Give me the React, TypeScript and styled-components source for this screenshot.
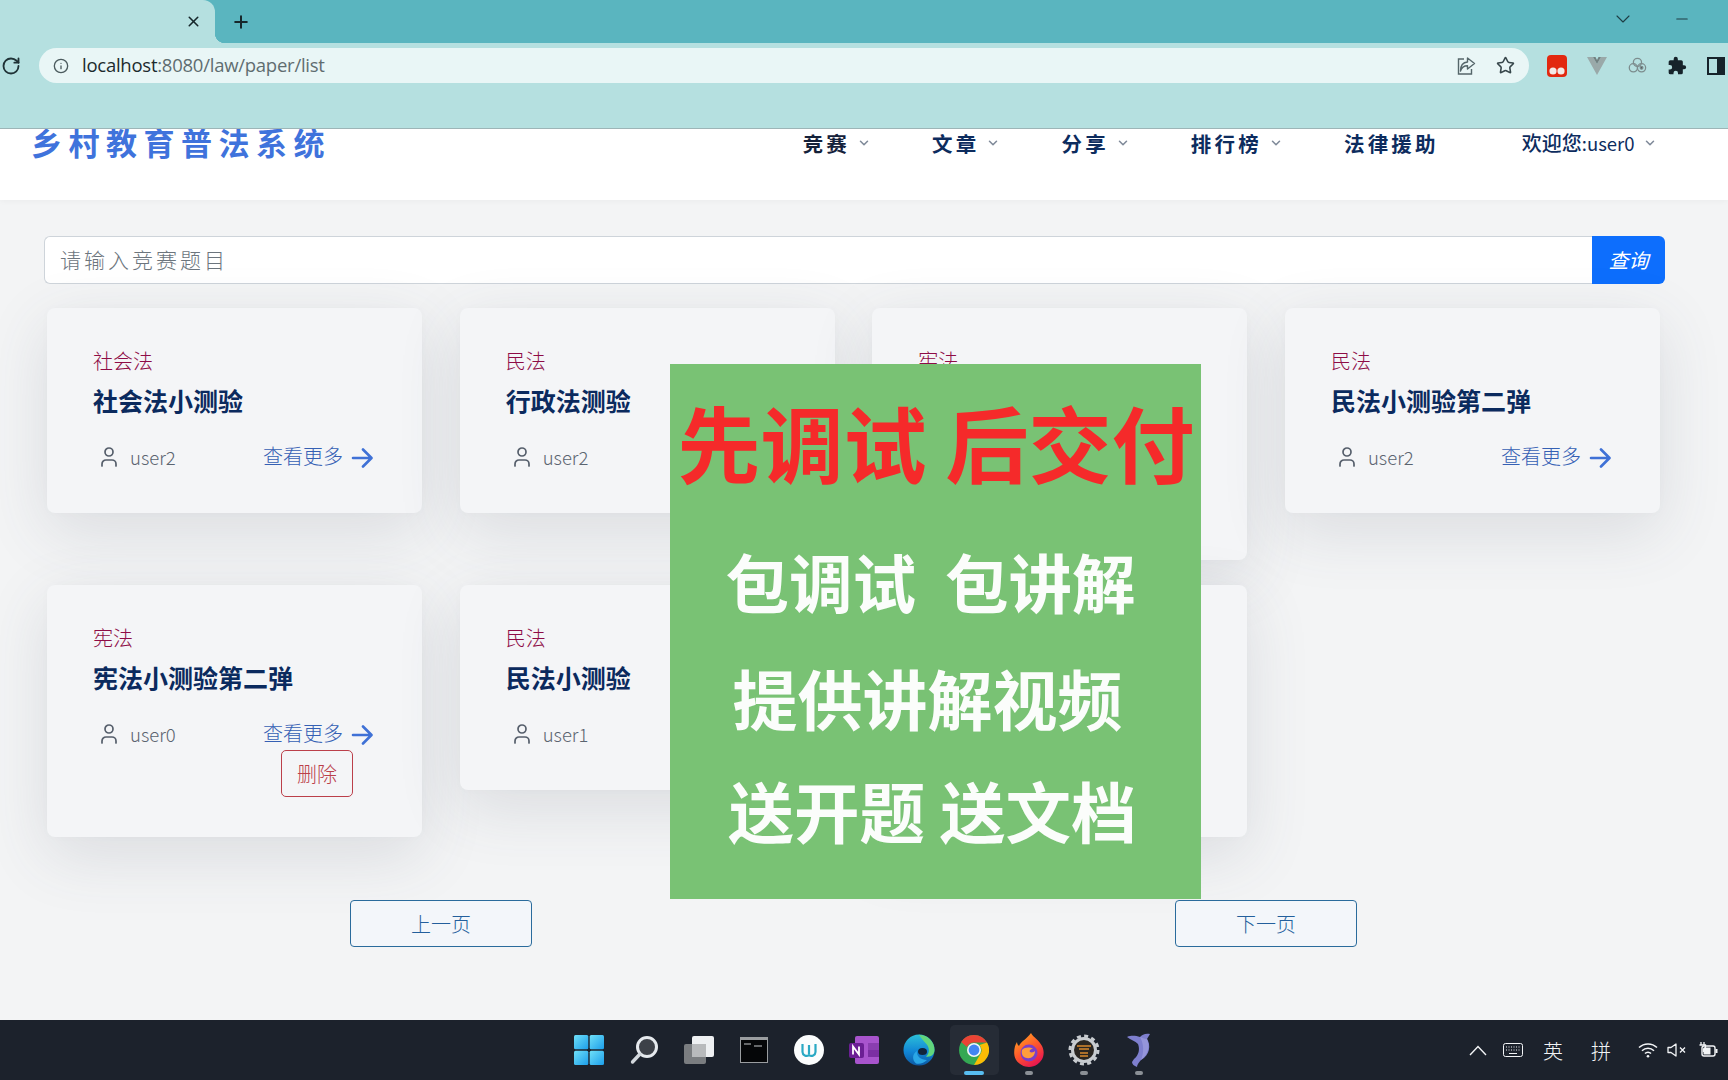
import React from "react";
import styled, { createGlobalStyle } from "styled-components";
import { ChevronDown, Info, Plus, RotateCw, Star, User, X, Minus } from "lucide-react";

const Global = createGlobalStyle`
  html, body { margin: 0; padding: 0; background: #f3f4f5; }
  * { box-sizing: border-box; }
  body { font-family: "Noto Sans CJK SC", "Noto Sans", sans-serif; }
`;

const Screen = styled.div`
  position: relative;
  width: 1728px;
  height: 1080px;
  overflow: hidden;
  display: flex;
  flex-direction: column;
  background: #f3f4f5;
`;

const BrowserChrome = styled.header`
  flex: none;
  height: 129px;
  background: #b5e0e0;
  border-bottom: 1px solid #9db5b7;
  position: relative;
  z-index: 2;
`;

const TabStrip = styled.div`
  height: 43px;
  background: #5ab5bf;
  display: flex;
  align-items: center;
`;

const Tab = styled.div`
  position: relative;
  width: 215px;
  height: 43px;
  background: #b5e0e0;
  border-top-right-radius: 12px;
  display: flex;
  align-items: center;
  justify-content: flex-end;
  padding-right: 13px;
  color: #16272b;
  &::after {
    content: "";
    position: absolute;
    right: -10px;
    bottom: 0;
    width: 10px;
    height: 10px;
    background: radial-gradient(circle at 100% 0, transparent 10px, #b5e0e0 10.5px);
  }
`;

const NewTab = styled.div`
  margin-left: 16px;
  display: flex;
  color: #16272b;
`;

const WindowControls = styled.div`
  margin-left: auto;
  display: flex;
  align-items: center;
  gap: 38px;
  padding: 0 37px 6px 0;
  color: #1e3d44;
`;

const Toolbar = styled.div`
  height: 35px;
  margin-top: 5px;
  display: flex;
  align-items: center;
`;

const Reload = styled.div`
  width: 39px;
  display: flex;
  padding-left: 1px;
  color: #1f3236;
`;

const AddressBar = styled.div`
  width: 1490px;
  height: 35px;
  border-radius: 18px;
  background: #e9f6f6;
  display: flex;
  align-items: center;
  padding: 0 14px 0 14px;
  color: #4b5b5e;
`;

const Url = styled.span`
  margin-left: 13px;
  padding-bottom: 2px;
  font-family: "Open Sans", sans-serif;
  font-size: 18.5px;
  letter-spacing: -0.25px;
  color: #5f6d70;
  b { font-weight: 400; color: #1c2a2d; }
`;

const AddressActions = styled.div`
  margin-left: auto;
  display: flex;
  align-items: center;
  gap: 20px;
`;

const Extensions = styled.div`
  display: flex;
  align-items: center;
  gap: 20px;
  padding-left: 18px;
`;

const Nav = styled.nav`
  flex: none;
  height: 71px;
  background: #fff;
  padding: 0 71px 0 31px;
  display: flex;
  align-items: flex-start;
  box-shadow: 0 1px 6px rgba(0, 0, 0, 0.04);
  position: relative;
  z-index: 1;
`;

const Brand = styled.div`
  height: 26px;
  line-height: 26px;
  font-size: 31px;
  font-weight: 700;
  letter-spacing: 6.5px;
  color: #3f73dc;
  white-space: nowrap;
`;

const Menu = styled.div`
  margin-left: auto;
  height: 27px;
  display: flex;
  align-items: center;
  gap: 61px;
`;

const MenuItem = styled.div<{ $plain?: boolean; $user?: boolean; $dark?: boolean }>`
  display: flex;
  align-items: center;
  gap: ${(p) => (p.$user ? "8.5px" : "7px")};
  font-size: ${(p) => (p.$user ? "20px" : "20.5px")};
  font-weight: ${(p) => (p.$user ? 500 : 700)};
  letter-spacing: ${(p) => (p.$user ? "0" : "3.2px")};
  color: ${(p) => (p.$dark ? "#14213a" : "#0d2c5e")};
  padding-right: ${(p) => (p.$plain ? "22px" : "0")};
  white-space: nowrap;
  svg { color: #7f8a99; }
`;

const UserName = styled.span`
  font-size: 18.5px;
  font-weight: 400;
`;

const Main = styled.main`
  flex: 1;
  position: relative;
  padding: 36px 0 0 44px;
`;

const SearchRow = styled.form`
  width: 1621px;
  height: 48px;
  display: flex;
`;

const SearchInput = styled.input`
  flex: 1;
  height: 48px;
  border: 1px solid #ced4da;
  border-right: none;
  border-radius: 6px 0 0 6px;
  background: #fff;
  padding: 0 15px 2px;
  font-family: inherit;
  font-size: 21px;
  font-weight: 300;
  letter-spacing: 3px;
  &::placeholder { color: #6c757d; opacity: 1; }
`;

const SearchButton = styled.button`
  width: 73px;
  height: 48px;
  border: none;
  border-radius: 0 6px 6px 0;
  background: #0d6efd;
  color: #fff;
  padding: 0 0 2px;
  font-family: inherit;
  font-size: 20px;
  font-style: italic;
  font-weight: 400;
`;

const CardGrid = styled.section`
  margin: 24px 0 0 3px;
  width: 1614px;
  display: grid;
  grid-template-columns: repeat(4, 375px);
  column-gap: 37.67px;
  row-gap: 25px;
  align-items: start;
`;

const Card = styled.article`
  background: #f4f5f7;
  border-radius: 8px;
  padding: 38px 49px 40px 46px;
  display: flex;
  flex-direction: column;
  box-shadow: 0 18px 64px rgba(70, 80, 100, 0.14), 0 0 8px rgba(70, 80, 100, 0.02);
`;

const Tag = styled.div`
  height: 30px;
  line-height: 30px;
  font-size: 20px;
  font-weight: 300;
  color: #8e0c46;
`;

const Title = styled.h3`
  margin: 6px 0 0;
  height: 36px;
  line-height: 36px;
  font-size: 25px;
  font-weight: 700;
  color: #0b2a5e;
  white-space: nowrap;
`;

const CardFooter = styled.div`
  margin: 24px 0 1px;
  height: 30px;
  display: flex;
  align-items: center;
  justify-content: space-between;
`;

const Author = styled.div`
  display: flex;
  align-items: center;
  gap: 9px;
  padding-left: 4px;
  font-size: 18.5px;
  font-weight: 300;
  color: #5b6470;
  svg { color: #555e6b; }
`;

const More = styled.a`
  display: flex;
  align-items: center;
  gap: 8px;
  font-size: 20px;
  font-weight: 300;
  color: #3560b4;
  line-height: 24px;
  margin-top: -3px;
  svg { margin-top: 4px; }
`;

const DeleteButton = styled.button`
  align-self: flex-end;
  margin-right: 20px;
  width: 72px;
  height: 47px;
  border: 1px solid #bb3f4a;
  border-radius: 5px;
  background: transparent;
  color: #bb3f4a;
  font-family: inherit;
  font-size: 20px;
  font-weight: 300;
`;

const Pager = styled.div`
  margin: 63px 0 0 306px;
  width: 1007px;
  display: flex;
  justify-content: space-between;
`;

const PageButton = styled.button`
  width: 182px;
  height: 47px;
  border: 1px solid #2a6b9c;
  border-radius: 4px;
  background: #f3f6fa;
  color: #235f9c;
  font-family: inherit;
  font-size: 20px;
  font-weight: 300;
`;

const Promo = styled.aside`
  position: absolute;
  left: 670px;
  top: 164px;
  width: 531px;
  height: 535px;
  background: #79c274;
  display: flex;
  flex-direction: column;
  align-items: center;
`;

const PromoHead = styled.div`
  margin: 19px 0 0 1px;
  height: 116px;
  line-height: 116px;
  font-size: 83px;
  font-weight: 700;
  color: #f52a2a;
  white-space: pre;
`;

const PromoLine = styled.div<{ $top: number; $left: number; $size: number }>`
  margin-top: ${(p) => p.$top}px;
  margin-left: ${(p) => p.$left}px;
  height: 90px;
  line-height: 90px;
  font-size: ${(p) => p.$size}px;
  font-weight: 700;
  color: #fbfdfb;
  white-space: pre;
`;

const Taskbar = styled.footer`
  flex: none;
  height: 60px;
  background: #1c222c;
  display: grid;
  grid-template-columns: 1fr auto 1fr;
  align-items: center;
  position: relative;
  z-index: 2;
`;

const Dock = styled.div`
  grid-column: 2;
  display: flex;
  align-items: center;
`;

const DockItem = styled.div<{ $active?: boolean; $running?: boolean }>`
  position: relative;
  width: 55px;
  height: 50px;
  display: flex;
  align-items: center;
  justify-content: center;
  &::before {
    content: "";
    display: ${(p) => (p.$active ? "block" : "none")};
    position: absolute;
    inset: 0 3px;
    background: #262c36;
    border-radius: 5px;
  }
  &::after {
    content: "";
    display: ${(p) => (p.$active || p.$running ? "block" : "none")};
    position: absolute;
    bottom: 0;
    left: 50%;
    transform: translateX(-50%);
    width: ${(p) => (p.$active ? 20 : 8)}px;
    height: 4px;
    border-radius: 2px;
    background: ${(p) => (p.$active ? "#58bdf0" : "#8b9096")};
  }
  svg { position: relative; z-index: 1; }
`;

const Tray = styled.div`
  grid-column: 3;
  justify-self: end;
  display: flex;
  align-items: center;
  color: #f2f4f6;
  padding-right: 3px;
`;

const TraySlot = styled.div<{ $w: number }>`
  width: ${(p) => p.$w}px;
  display: flex;
  justify-content: center;
  align-items: center;
  font-size: 20px;
  font-weight: 300;
`;

const CardArrow = () => (
  <svg width="22" height="22" viewBox="0 0 22 22" fill="none" stroke="#3f71d6" strokeWidth="2.6" strokeLinecap="round" strokeLinejoin="round">
    <path d="M2 11h18M12 2.5l8.5 8.5-8.5 8.5" />
  </svg>
);

const TrayChevron = () => (
  <svg width="18" height="11" viewBox="0 0 18 11" fill="none" stroke="#f2f4f6" strokeWidth="1.4">
    <path d="M1 10l8-8.5L17 10" />
  </svg>
);

const ShareIcon = () => (
  <svg width="20" height="20" viewBox="0 0 20 20" fill="none" stroke="#55666a" strokeWidth="1.4">
    <path d="M8 3H2.5v15h13v-5" />
    <path d="M11.5 2l7 5.5-7 5.5V9.7C8 9.7 5.5 11.5 4.5 15c0-5 2.5-8.6 7-9z" strokeLinejoin="round" />
  </svg>
);

const Tampermonkey = () => (
  <svg width="20" height="22" viewBox="0 0 20 22">
    <rect x="0" y="0" width="20" height="22" rx="4" fill="#e2280f" />
    <circle cx="6" cy="16" r="3.6" fill="#f3e9e6" />
    <circle cx="14" cy="16" r="3.6" fill="#f3e9e6" />
  </svg>
);

const VueIcon = () => (
  <svg width="20" height="20" viewBox="0 0 20 20">
    <path d="M0 1h6l4 7 4-7h6L10 19z" fill="#9aa9a9" />
    <path d="M6 1l4 7 4-7h-2.5L10 4 8.5 1z" fill="#728080" />
  </svg>
);

const LinkExt = () => (
  <svg width="20" height="20" viewBox="0 0 22 20" fill="none" stroke="#7c8c8d" strokeWidth="1.4">
    <circle cx="7" cy="12" r="4.5" />
    <circle cx="11.5" cy="6" r="4.5" />
    <circle cx="16" cy="12" r="4.5" />
    <circle cx="16" cy="12" r="1.5" fill="#505f60" />
  </svg>
);

const PuzzleIcon = () => (
  <svg width="20" height="20" viewBox="0 0 24 24" fill="#16232a">
    <path d="M20.5 11H19V7a2 2 0 0 0-2-2h-4V3.5a2.5 2.5 0 0 0-5 0V5H4a2 2 0 0 0-2 2v3.8h1.5a2.7 2.7 0 0 1 0 5.4H2V20a2 2 0 0 0 2 2h3.8v-1.5a2.7 2.7 0 0 1 5.4 0V22H17a2 2 0 0 0 2-2v-4h1.5a2.5 2.5 0 0 0 0-5z" />
  </svg>
);

const SidePanel = () => (
  <svg width="18" height="18" viewBox="0 0 18 18">
    <rect x="1" y="1" width="16" height="16" fill="none" stroke="#16232a" strokeWidth="2" />
    <rect x="10" y="1" width="7" height="16" fill="#16232a" />
  </svg>
);

const WindowsLogo = () => (
  <svg width="30" height="30" viewBox="0 0 30 30">
    <defs>
      <linearGradient id="winG" x1="0" y1="0" x2="1" y2="1">
        <stop offset="0" stopColor="#6fe0f8" />
        <stop offset="1" stopColor="#1c9eea" />
      </linearGradient>
    </defs>
    <rect x="0" y="0" width="14.3" height="14.3" rx="1.5" fill="url(#winG)" />
    <rect x="15.7" y="0" width="14.3" height="14.3" rx="1.5" fill="url(#winG)" />
    <rect x="0" y="15.7" width="14.3" height="14.3" rx="1.5" fill="url(#winG)" />
    <rect x="15.7" y="15.7" width="14.3" height="14.3" rx="1.5" fill="url(#winG)" />
  </svg>
);

const SearchGlass = () => (
  <svg width="30" height="30" viewBox="0 0 30 30" fill="none">
    <circle cx="18" cy="12" r="9.5" fill="#3d4148" stroke="#e6eaee" strokeWidth="3" />
    <path d="M11 19l-7.5 8" stroke="#d3d8dd" strokeWidth="3.4" strokeLinecap="round" />
  </svg>
);

const TaskView = () => (
  <svg width="30" height="30" viewBox="0 0 30 30">
    <rect x="8" y="1" width="22" height="21" rx="2" fill="#eef0f2" />
    <rect x="0" y="9" width="22" height="20" rx="2" fill="#7a7d80" />
    <rect x="8" y="9" width="14" height="13" fill="#b8babc" />
  </svg>
);

const Terminal = () => (
  <svg width="28" height="26" viewBox="0 0 28 26">
    <rect x="0" y="0" width="28" height="26" fill="#9a9da0" />
    <rect x="1" y="3" width="26" height="22" fill="#050608" />
    <path d="M4 7h7M14 9h8" stroke="#c8cacc" strokeWidth="1" />
  </svg>
);

const WordCircle = () => (
  <svg width="30" height="30" viewBox="0 0 30 30">
    <circle cx="15" cy="15" r="15" fill="#fbfdfd" />
    <path d="M8.5 9v8a4 4 0 0 0 6.5 3 4 4 0 0 0 6.5-3V9M15 10v9" fill="none" stroke="#2aa9c4" strokeWidth="2.2" />
  </svg>
);

const OneNote = () => (
  <svg width="30" height="30" viewBox="0 0 30 30">
    <rect x="6" y="1" width="24" height="28" rx="2" fill="#a854cd" />
    <rect x="19" y="8" width="11" height="7" fill="#8a3eb0" />
    <rect x="19" y="15" width="11" height="7" fill="#7b2fa3" />
    <rect x="0" y="8" width="15" height="15" rx="2" fill="#6b1f94" />
    <path d="M4 19.5v-8l6 8v-8" fill="none" stroke="#fff" strokeWidth="1.8" />
  </svg>
);

const Edge = () => (
  <svg width="32" height="32" viewBox="0 0 32 32">
    <defs>
      <linearGradient id="edgeA" x1="0" y1="0" x2="0" y2="1">
        <stop offset="0" stopColor="#2cc0d8" />
        <stop offset="0.55" stopColor="#1186d6" />
        <stop offset="1" stopColor="#0c59a4" />
      </linearGradient>
    </defs>
    <circle cx="16" cy="16" r="15.5" fill="url(#edgeA)" />
    <path d="M16 0.8C25 1 31.5 8 31.5 16c0 5-4.5 7.5-8.5 6.5 4-3 4-10-1-14-2-2-4-4.5-6-7.7z" fill="#62d67c" />
    <ellipse cx="19.5" cy="17.5" rx="4.5" ry="3.6" fill="#12233a" />
    <path d="M14 17c-1 5 4 9 10 9-3 3-7 4.5-11 3.5C9 26 9 20 14 17z" fill="#2aa6e6" />
  </svg>
);

const Chrome = () => (
  <svg width="30" height="30" viewBox="0 0 30 30">
    <circle cx="15" cy="15" r="15" fill="#34a853" />
    <path d="M15 0a15 15 0 0 1 13 7.5H15a7.5 7.5 0 0 0-7 4.5L2.2 7A15 15 0 0 1 15 0z" fill="#ea4335" />
    <path d="M28 7.5A15 15 0 0 1 15 30l6.5-11.2A7.5 7.5 0 0 0 20.5 10z" fill="#fbbc05" />
    <circle cx="15" cy="15" r="7" fill="#f4f6f8" />
    <circle cx="15" cy="15" r="5.4" fill="#4285f4" />
  </svg>
);

const Firefox = () => (
  <svg width="30" height="34" viewBox="0 0 30 34">
    <defs>
      <linearGradient id="ffA" x1="0" y1="0" x2="0.6" y2="1">
        <stop offset="0" stopColor="#ffb21f" />
        <stop offset="0.55" stopColor="#ff5a2c" />
        <stop offset="1" stopColor="#e8184f" />
      </linearGradient>
    </defs>
    <path d="M17 0c2 4 8 7 11 13 2 4 2 8 1 11-2 6-8 10-14 10S2 30 .5 23C-.5 17 1 12 3 9c0 2 1 3 2 4 2-5 8-7 12-13z" fill="url(#ffA)" />
    <circle cx="15" cy="20" r="8.5" fill="#7a3fc8" />
    <path d="M8 17c3-3 8-3 11-1-3 0-4 2-3 3 2 1 4 0 5-1 0 5-4 8-8 7-4 0-6-4-5-8z" fill="#ff9d3c" />
  </svg>
);

const GearIde = () => (
  <svg width="32" height="32" viewBox="0 0 32 32">
    <circle cx="16" cy="16" r="11.5" fill="#2a2622" stroke="#c8ccd0" strokeWidth="3" />
    <circle cx="16" cy="16" r="14" fill="none" stroke="#c8ccd0" strokeWidth="3" strokeDasharray="4 3.3" />
    <path d="M9 12h14M11 15h10M12 19h8M12 22h8" stroke="#d9892e" strokeWidth="1.6" />
  </svg>
);

const Dolphin = () => (
  <svg width="26" height="34" viewBox="0 0 26 34">
    <path d="M1 4C6 2 10 3 14 4c2-2 5-4 10-3-1 2-2 3-3 5 4 6 3 16-6 21-2 2-4 5-4 7-3-1-5-3-5-5l2-3c5-4 6-10 4-15C9 8 5 7 1 4z" fill="#7e7fce" />
    <path d="M14 4c3 1 5 2 7 2 3 6 2 15-6 21 3-7 3-16-1-23z" fill="#9595da" />
  </svg>
);

const KeyboardIcon = () => (
  <svg width="20" height="14" viewBox="0 0 20 14" fill="none" stroke="#f2f4f6">
    <rect x="0.5" y="0.5" width="19" height="13" rx="2" />
    <path d="M3 4h14M3 7h14" strokeDasharray="1 1.5" />
    <path d="M6 10.5h8" />
  </svg>
);

const Wifi = () => (
  <svg width="20" height="16" viewBox="0 0 20 16" fill="none" stroke="#f2f4f6" strokeWidth="1.5">
    <path d="M1 5.5a13 13 0 0 1 18 0M4 8.7a8.5 8.5 0 0 1 12 0M7 11.6a4 4 0 0 1 6 0" />
    <circle cx="10" cy="14.2" r="1.3" fill="#f2f4f6" stroke="none" />
  </svg>
);

const Muted = () => (
  <svg width="20" height="14" viewBox="0 0 20 14" fill="none" stroke="#f2f4f6" strokeWidth="1.3">
    <path d="M1 4.5h3L9 1v12L4 9.5H1z" strokeLinejoin="round" />
    <path d="M13 4.5l5 5M18 4.5l-5 5" />
  </svg>
);

const Battery = () => (
  <svg width="20" height="16" viewBox="0 0 20 16">
    <path d="M3 0v3M6 0v3M1.5 3h6v2.5L5.5 7v3" stroke="#f2f4f6" strokeWidth="1.3" fill="none" />
    <rect x="4" y="4" width="13" height="10" rx="2" fill="none" stroke="#f2f4f6" strokeWidth="1.4" />
    <rect x="5.5" y="5.5" width="7" height="7" fill="#f2f4f6" />
    <rect x="17.5" y="7" width="2" height="4" fill="#f2f4f6" />
  </svg>
);

type CardData = { tag: string; title: string; user: string; del?: boolean };

const cards: CardData[] = [
  { tag: "社会法", title: "社会法小测验", user: "user2" },
  { tag: "民法", title: "行政法测验", user: "user2" },
  { tag: "宪法", title: "宪法小测验", user: "user0", del: true },
  { tag: "民法", title: "民法小测验第二弹", user: "user2" },
  { tag: "宪法", title: "宪法小测验第二弹", user: "user0", del: true },
  { tag: "民法", title: "民法小测验", user: "user1" },
  { tag: "民法", title: "民法小测验", user: "user0", del: true },
];

const menu = [
  { label: "竞赛", dark: true },
  { label: "文章" },
  { label: "分享" },
  { label: "排行榜" },
];

export default function App() {
  return (
    <Screen>
      <Global />
      <BrowserChrome>
        <TabStrip>
          <Tab><X size={17} strokeWidth={2.2} /></Tab>
          <NewTab><Plus size={20} strokeWidth={2.4} /></NewTab>
          <WindowControls>
            <ChevronDown size={24} strokeWidth={1.1} />
            <Minus size={18} strokeWidth={1.4} />
          </WindowControls>
        </TabStrip>
        <Toolbar>
          <Reload><RotateCw size={20} strokeWidth={2.2} /></Reload>
          <AddressBar>
            <Info size={16} strokeWidth={2} />
            <Url><b>localhost</b>:8080/law/paper/list</Url>
            <AddressActions>
              <ShareIcon />
              <Star size={19} strokeWidth={2} color="#37474b" />
            </AddressActions>
          </AddressBar>
          <Extensions>
            <Tampermonkey />
            <VueIcon />
            <LinkExt />
            <PuzzleIcon />
            <SidePanel />
          </Extensions>
        </Toolbar>
      </BrowserChrome>

      <Nav>
        <Brand>乡村教育普法系统</Brand>
        <Menu>
          {menu.map((m) => (
            <MenuItem key={m.label} $dark={m.dark}>
              {m.label}
              <ChevronDown size={14} strokeWidth={2.6} />
            </MenuItem>
          ))}
          <MenuItem $plain>法律援助</MenuItem>
          <MenuItem $user>
            <span>欢迎您<UserName>:user0</UserName></span>
            <ChevronDown size={14} strokeWidth={2.6} />
          </MenuItem>
        </Menu>
      </Nav>

      <Main>
        <SearchRow>
          <SearchInput placeholder="请输入竞赛题目" />
          <SearchButton type="button">查询</SearchButton>
        </SearchRow>
        <CardGrid>
          {cards.map((c, i) => (
            <Card key={i}>
              <Tag>{c.tag}</Tag>
              <Title>{c.title}</Title>
              <CardFooter>
                <Author>
                  <User size={24} strokeWidth={1.7} />
                  {c.user}
                </Author>
                <More>
                  查看更多
                  <CardArrow />
                </More>
              </CardFooter>
              {c.del && <DeleteButton type="button">删除</DeleteButton>}
            </Card>
          ))}
        </CardGrid>
        <Pager>
          <PageButton type="button">上一页</PageButton>
          <PageButton type="button">下一页</PageButton>
        </Pager>
        <Promo>
          <PromoHead>先调试 后交付</PromoHead>
          <PromoLine $top={36} $left={-10} $size={63.5}>包调试  包讲解</PromoLine>
          <PromoLine $top={27} $left={-16} $size={65}>提供讲解视频</PromoLine>
          <PromoLine $top={23} $left={-6} $size={65.5}>送开题 送文档</PromoLine>
        </Promo>
      </Main>

      <Taskbar>
        <Dock>
          <DockItem><WindowsLogo /></DockItem>
          <DockItem><SearchGlass /></DockItem>
          <DockItem><TaskView /></DockItem>
          <DockItem><Terminal /></DockItem>
          <DockItem><WordCircle /></DockItem>
          <DockItem><OneNote /></DockItem>
          <DockItem><Edge /></DockItem>
          <DockItem $active><Chrome /></DockItem>
          <DockItem $running><Firefox /></DockItem>
          <DockItem $running><GearIde /></DockItem>
          <DockItem $running><Dolphin /></DockItem>
        </Dock>
        <Tray>
          <TraySlot $w={22}><TrayChevron /></TraySlot>
          <TraySlot $w={48}><KeyboardIcon /></TraySlot>
          <TraySlot $w={32}>英</TraySlot>
          <TraySlot $w={64}>拼</TraySlot>
          <TraySlot $w={30}><Wifi /></TraySlot>
          <TraySlot $w={28}><Muted /></TraySlot>
          <TraySlot $w={34}><Battery /></TraySlot>
        </Tray>
      </Taskbar>
    </Screen>
  );
}
